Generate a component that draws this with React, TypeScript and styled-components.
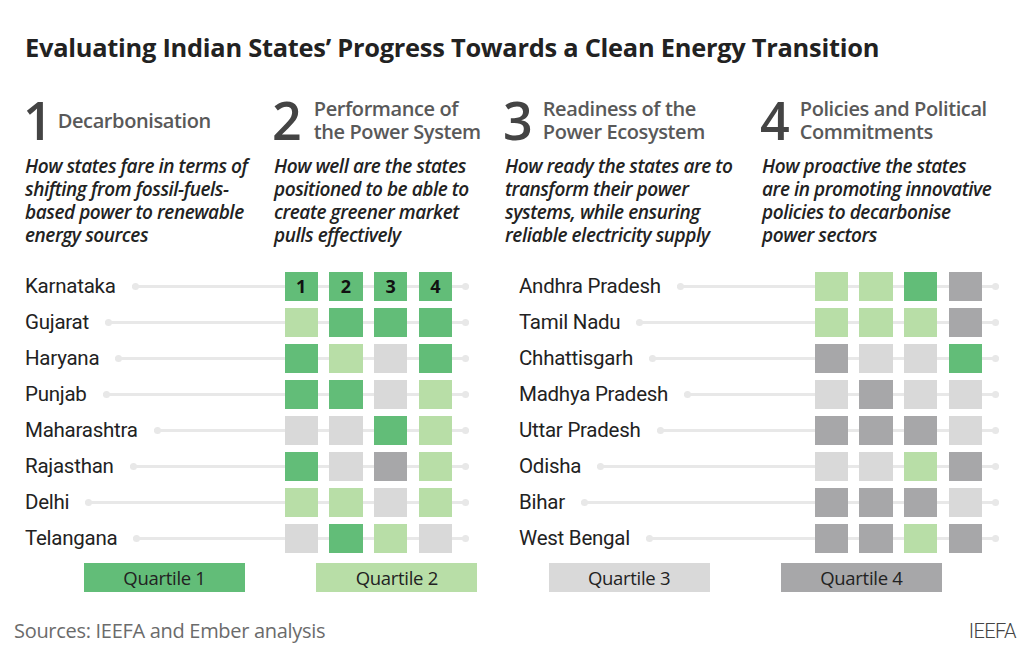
import React from 'react';
import styled, { createGlobalStyle } from 'styled-components';

const GlobalStyle = createGlobalStyle`
  * {
    margin: 0;
    padding: 0;
    box-sizing: border-box;
  }

  body {
    background: #ffffff;
    font-family: 'Open Sans', 'Liberation Sans', sans-serif;
    color: #222222;
    -webkit-font-smoothing: antialiased;
  }
`;

type Q = 1 | 2 | 3 | 4;

const QUARTILE_COLORS: Record<Q, string> = {
  1: '#62bd78',
  2: '#b8dea7',
  3: '#d9d9d9',
  4: '#a7a7a9',
};

const Page = styled.div`
  width: 1023px;
  height: 647px;
  padding: 31px 0 0 0;
  display: flex;
  flex-direction: column;
`;

const Title = styled.h1`
  font-family: 'Open Sans', sans-serif;
  font-weight: 700;
  font-size: 25.4px;
  letter-spacing: -0.25px;
  line-height: 32px;
  color: #222;
  padding-left: 25px;
`;

const Pillars = styled.div`
  display: grid;
  grid-template-columns: 249px 231px 257px 1fr;
  padding-left: 25px;
  margin-top: 33px;
`;

const Pillar = styled.div`
  display: flex;
  flex-direction: column;
`;

const PillarHead = styled.div`
  display: flex;
  align-items: center;
  height: 48px;
`;

const PillarNumber = styled.span<{ $gap: number }>`
  font-family: 'Open Sans', sans-serif;
  font-weight: 600;
  font-size: 52px;
  line-height: 48px;
  color: #444;
  letter-spacing: -1px;
  margin-left: -2px;
  margin-right: ${p => p.$gap}px;
`;

const PillarName = styled.span`
  font-family: 'Open Sans', sans-serif;
  font-weight: 600;
  font-size: 20px;
  line-height: 23px;
  letter-spacing: -0.4px;
  color: #595959;
  white-space: pre-line;
`;

const PillarText = styled.p`
  margin-top: 11px;
  font-family: 'Open Sans', sans-serif;
  font-style: italic;
  font-weight: 600;
  font-size: 19px;
  line-height: 23px;
  letter-spacing: -0.45px;
  color: #222;
  white-space: pre-line;
`;

const Charts = styled.div`
  display: flex;
  margin-top: 21px;
  padding-left: 25px;
`;

const Panel = styled.div<{ $width: number; $offset: number }>`
  width: ${p => p.$width}px;
  margin-left: ${p => p.$offset}px;
  display: flex;
  flex-direction: column;
`;

const Row = styled.div`
  display: flex;
  align-items: center;
  height: 36px;
`;

const StateName = styled.span`
  font-family: Roboto, 'Liberation Sans', sans-serif;
  font-size: 20.5px;
  letter-spacing: -0.25px;
  color: #222;
  margin-right: 16px;
  white-space: nowrap;
`;

const Track = styled.div`
  flex: 1;
  display: flex;
  align-items: center;
  height: 30px;
  background: linear-gradient(#e8e8e8, #e8e8e8) center / 100% 3px no-repeat;
`;

const Dot = styled.span`
  width: 7px;
  height: 7px;
  border-radius: 50%;
  background: #e8e8e8;
  flex: none;
`;

const Spacer = styled.span`
  flex: 1;
`;

const Cells = styled.div`
  display: flex;
  gap: 11.3px;
  margin-right: 10px;
`;

const Cell = styled.span<{ $q: Q }>`
  width: 33.4px;
  height: 29px;
  background: ${p => QUARTILE_COLORS[p.$q]};
  display: flex;
  align-items: center;
  justify-content: center;
  font-family: 'Open Sans', sans-serif;
  font-weight: 700;
  font-size: 18px;
  color: #111;
`;

const Legend = styled.div`
  display: flex;
  gap: 71.3px;
  padding-left: 84px;
  margin-top: 7px;
`;

const LegendBox = styled.div<{ $q: Q }>`
  width: 161px;
  height: 29px;
  background: ${p => QUARTILE_COLORS[p.$q]};
  display: flex;
  align-items: center;
  justify-content: center;
  font-family: 'Open Sans', sans-serif;
  font-size: 18.5px;
  letter-spacing: -0.3px;
  color: #222;
`;

const Footer = styled.div`
  display: flex;
  justify-content: space-between;
  align-items: baseline;
  padding: 0 7px 0 14px;
  margin-top: 25px;
`;

const Sources = styled.span`
  font-family: 'Open Sans', sans-serif;
  font-size: 20px;
  letter-spacing: -0.3px;
  color: #6b6b6b;
`;

const Brand = styled.span`
  font-family: Roboto, sans-serif;
  font-weight: 300;
  font-size: 20px;
  letter-spacing: -0.6px;
  color: #444;
`;

const pillars = [
  {
    n: '1',
    gap: 6,
    name: 'Decarbonisation',
    text: 'How states fare in terms of\nshifting from fossil-fuels-\nbased power to renewable\nenergy sources',
  },
  {
    n: '2',
    gap: 13,
    name: 'Performance of\nthe Power System',
    text: 'How well are the states\npositioned to be able to\ncreate greener market\npulls effectively',
  },
  {
    n: '3',
    gap: 11,
    name: 'Readiness of the\nPower Ecosystem',
    text: 'How ready the states are to\ntransform their power\nsystems, while ensuring\nreliable electricity supply',
  },
  {
    n: '4',
    gap: 11,
    name: 'Policies and Political\nCommitments',
    text: 'How proactive the states\nare in promoting innovative\npolicies to decarbonise\npower sectors',
  },
];

const leftStates: [string, Q[]][] = [
  ['Karnataka', [1, 1, 1, 1]],
  ['Gujarat', [2, 1, 1, 1]],
  ['Haryana', [1, 2, 3, 1]],
  ['Punjab', [1, 1, 3, 2]],
  ['Maharashtra', [3, 3, 1, 2]],
  ['Rajasthan', [1, 3, 4, 2]],
  ['Delhi', [2, 2, 3, 2]],
  ['Telangana', [3, 1, 2, 3]],
];

const rightStates: [string, Q[]][] = [
  ['Andhra Pradesh', [2, 2, 1, 4]],
  ['Tamil Nadu', [2, 2, 2, 4]],
  ['Chhattisgarh', [4, 3, 3, 1]],
  ['Madhya Pradesh', [3, 4, 3, 3]],
  ['Uttar Pradesh', [4, 4, 4, 3]],
  ['Odisha', [3, 3, 2, 4]],
  ['Bihar', [4, 4, 4, 3]],
  ['West Bengal', [4, 4, 2, 4]],
];

const StateRows: React.FC<{ rows: [string, Q[]][]; numbered?: boolean }> = ({ rows, numbered }) => (
  <>
    {rows.map(([name, qs], i) => (
      <Row key={name}>
        <StateName>{name}</StateName>
        <Track>
          <Dot />
          <Spacer />
          <Cells>
            {qs.map((q, j) => (
              <Cell key={j} $q={q}>
                {numbered && i === 0 ? j + 1 : null}
              </Cell>
            ))}
          </Cells>
          <Dot />
        </Track>
      </Row>
    ))}
  </>
);

const App: React.FC = () => (
  <>
    <GlobalStyle />
    <Page>
      <Title>Evaluating Indian States’ Progress Towards a Clean Energy Transition</Title>

      <Pillars>
        {pillars.map(p => (
          <Pillar key={p.n}>
            <PillarHead>
              <PillarNumber $gap={p.gap}>{p.n}</PillarNumber>
              <PillarName>{p.name}</PillarName>
            </PillarHead>
            <PillarText>{p.text}</PillarText>
          </Pillar>
        ))}
      </Pillars>

      <Charts>
        <Panel $width={444} $offset={0}>
          <StateRows rows={leftStates} numbered />
        </Panel>
        <Panel $width={480} $offset={50}>
          <StateRows rows={rightStates} />
        </Panel>
      </Charts>

      <Legend>
        <LegendBox $q={1}>Quartile 1</LegendBox>
        <LegendBox $q={2}>Quartile 2</LegendBox>
        <LegendBox $q={3}>Quartile 3</LegendBox>
        <LegendBox $q={4}>Quartile 4</LegendBox>
      </Legend>

      <Footer>
        <Sources>Sources: IEEFA and Ember analysis</Sources>
        <Brand>IEEFA</Brand>
      </Footer>
    </Page>
  </>
);

export default App;
